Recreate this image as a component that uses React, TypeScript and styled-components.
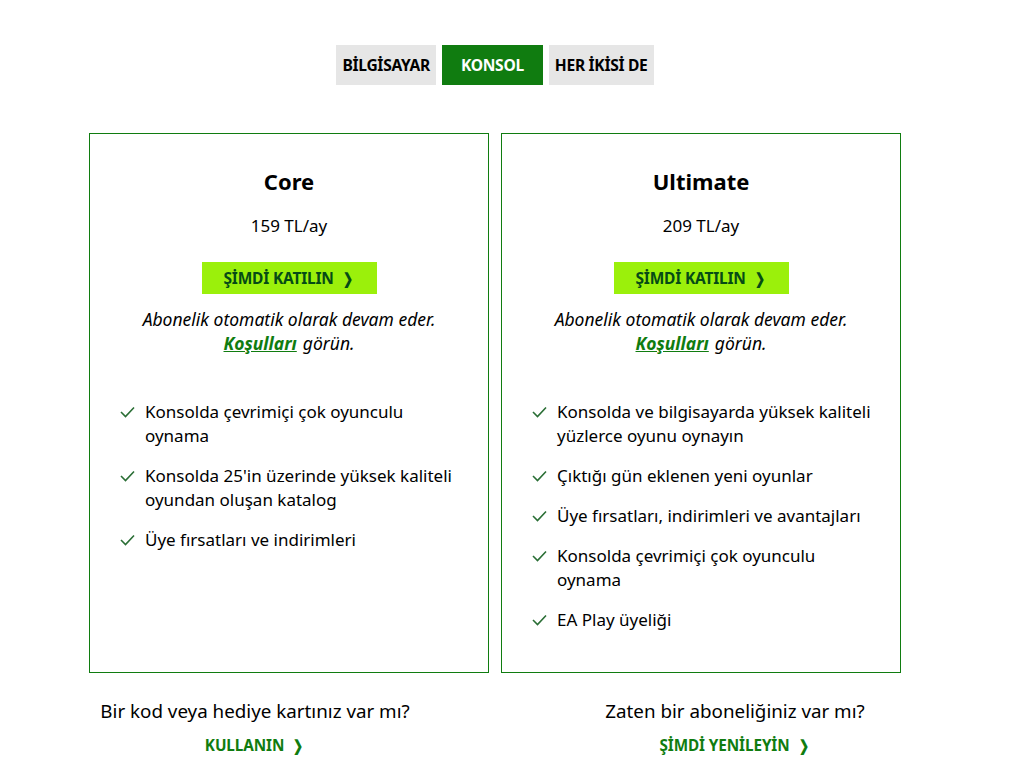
import React from "react";
import styled, { createGlobalStyle } from "styled-components";

const Global = createGlobalStyle`
  html, body { margin: 0; padding: 0; background: #fff; }
  body { font-family: "Noto Sans", "Open Sans", sans-serif; color: #000; }
`;

const Page = styled.div`
  width: 990px;
  padding-top: 45px;
  display: flex;
  flex-direction: column;
  align-items: center;
`;

const Tabs = styled.div`
  display: flex;
  gap: 6px;
`;

const Tab = styled.button<{ $active?: boolean }>`
  height: 40px;
  padding: 0 ${(p) => (p.$active ? "19px" : "6px")};
  min-width: ${(p) => (p.$active ? "100px" : "auto")};
  border: none;
  background: ${(p) => (p.$active ? "#107c10" : "#e6e6e6")};
  color: ${(p) => (p.$active ? "#fff" : "#000")};
  font-family: "Noto Sans", sans-serif;
  font-weight: 700;
  font-size: 15.6px;
  letter-spacing: -0.3px;
  cursor: pointer;
`;

const Cards = styled.div`
  margin-top: 48px;
  display: grid;
  grid-template-columns: 400px 400px;
  gap: 12px;
`;

const Card = styled.div`
  height: 540px;
  box-sizing: border-box;
  border: 1px solid #107c10;
  padding: 32px 10px 0 30px;
  display: flex;
  flex-direction: column;
  align-items: center;
`;

const Title = styled.h2`
  margin: 0 0 0 -20px;
  font-size: 22px;
  line-height: 30px;
  font-weight: 700;
`;

const Price = styled.div`
  margin: 18px 0 0 -20px;
  font-size: 17px;
  line-height: 24px;
`;

const JoinButton = styled.a`
  margin: 24px 0 0 -20px;
  width: 175px;
  height: 32px;
  background: #9bf00b;
  color: #054b16;
  font-weight: 700;
  font-size: 15.5px;
  display: flex;
  align-items: center;
  justify-content: center;
  gap: 8px;
  text-decoration: none;
  letter-spacing: -0.2px;
`;

const Chevron = styled.span`
  font-size: 15px;
  font-weight: 700;
  transform: scaleX(0.8);
  display: inline-block;
`;

const Note = styled.p`
  margin: 13px 0 0 -20px;
  font-style: italic;
  font-size: 17.5px;
  line-height: 24px;
  text-align: center;
`;

const TermsLink = styled.a`
  color: #107c10;
  font-weight: 700;
  text-decoration: underline;
  margin-right: 6px;
`;

const Features = styled.ul`
  list-style: none;
  margin: 45px 0 0;
  padding: 0;
  align-self: stretch;
  display: flex;
  flex-direction: column;
  gap: 16px;
`;

const Feature = styled.li`
  display: flex;
  gap: 10px;
  font-size: 17px;
  line-height: 24px;
  white-space: pre-line;
`;

const Check = styled.svg`
  flex: none;
  margin-top: 6px;
`;

const Bottom = styled.div`
  margin-top: 24px;
  width: 960px;
  display: grid;
  grid-template-columns: 1fr 1fr;
`;

const BottomCol = styled.div`
  display: flex;
  flex-direction: column;
  align-items: center;
`;

const Question = styled.div`
  font-size: 18.8px;
  line-height: 28px;
`;

const GreenLink = styled.a`
  margin-top: 10px;
  color: #107c10;
  font-weight: 700;
  font-size: 15.3px;
  display: flex;
  align-items: center;
  gap: 8px;
  text-decoration: none;
  letter-spacing: -0.1px;
`;

const CheckIcon = () => (
  <Check width="15" height="12" viewBox="0 0 15 12">
    <polyline points="1,6 5.5,10.5 14,1.5" fill="none" stroke="#2a6e35" strokeWidth="1.6" />
  </Check>
);

const plans = [
  {
    name: "Core",
    price: "159 TL/ay",
    features: [
      "Konsolda çevrimiçi çok oyunculu\noynama",
      "Konsolda 25'in üzerinde yüksek kaliteli\noyundan oluşan katalog",
      "Üye fırsatları ve indirimleri",
    ],
  },
  {
    name: "Ultimate",
    price: "209 TL/ay",
    features: [
      "Konsolda ve bilgisayarda yüksek kaliteli\nyüzlerce oyunu oynayın",
      "Çıktığı gün eklenen yeni oyunlar",
      "Üye fırsatları, indirimleri ve avantajları",
      "Konsolda çevrimiçi çok oyunculu\noynama",
      "EA Play üyeliği",
    ],
  },
];

export default function App() {
  return (
    <>
      <Global />
      <Page>
        <Tabs>
          <Tab>BİLGİSAYAR</Tab>
          <Tab $active>KONSOL</Tab>
          <Tab>HER İKİSİ DE</Tab>
        </Tabs>
        <Cards>
          {plans.map((p) => (
            <Card key={p.name}>
              <Title>{p.name}</Title>
              <Price>{p.price}</Price>
              <JoinButton href="#">
                ŞİMDİ KATILIN <Chevron>❯</Chevron>
              </JoinButton>
              <Note>
                Abonelik otomatik olarak devam eder.
                <br />
                <TermsLink href="#">Koşulları</TermsLink>görün.
              </Note>
              <Features>
                {p.features.map((f) => (
                  <Feature key={f}>
                    <CheckIcon />
                    <span>{f}</span>
                  </Feature>
                ))}
              </Features>
            </Card>
          ))}
        </Cards>
        <Bottom>
          <BottomCol>
            <Question>Bir kod veya hediye kartınız var mı?</Question>
            <GreenLink href="#">
              KULLANIN <Chevron>❯</Chevron>
            </GreenLink>
          </BottomCol>
          <BottomCol>
            <Question>Zaten bir aboneliğiniz var mı?</Question>
            <GreenLink href="#">
              ŞİMDİ YENİLEYİN <Chevron>❯</Chevron>
            </GreenLink>
          </BottomCol>
        </Bottom>
      </Page>
    </>
  );
}
